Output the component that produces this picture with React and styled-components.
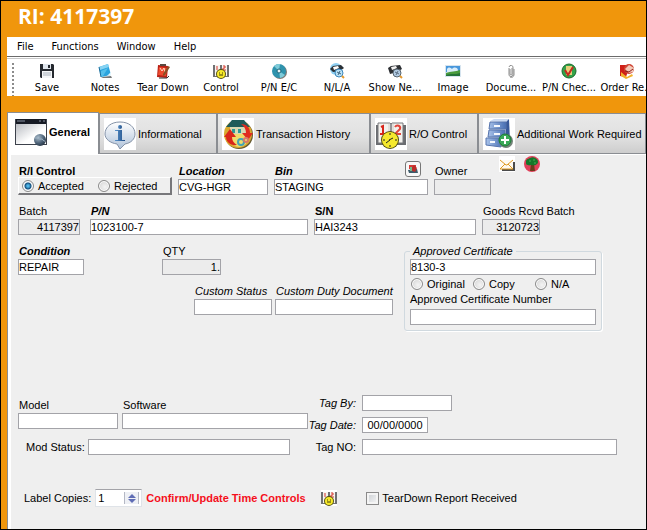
import React, { useState } from 'react';
import styled, { createGlobalStyle } from 'styled-components';

const TOOLS = [
  { label: 'Save', icon: 'save' },
  { label: 'Notes', icon: 'notes' },
  { label: 'Tear Down', icon: 'tear' },
  { label: 'Control', icon: 'control' },
  { label: 'P/N E/C', icon: 'disc' },
  { label: 'N/L/A', icon: 'nla' },
  { label: 'Show Ne...', icon: 'next' },
  { label: 'Image', icon: 'image' },
  { label: 'Docume...', icon: 'clip' },
  { label: 'P/N Chec...', icon: 'check' },
  { label: 'Order Re...', icon: 'order' },
];

const TABS = [
  { label: 'General', icon: 'window', width: 92 },
  { label: 'Informational', icon: 'info', width: 118 },
  { label: 'Transaction History', icon: 'history', width: 153 },
  { label: 'R/O Control', icon: 'calendar', width: 108 },
  { label: 'Additional Work Required', icon: 'cabinet', width: 168 },
];

const SMALL_ICONS = {
  save: (
    <>
      <path d="M1 1h13l1 1v13H2l-1-1z" fill="#25292f" />
      <path d="M4 1h8v5H4z" fill="#dfe5ec" />
      <path d="M9 2h2v3H9z" fill="#25292f" />
      <path d="M3 8h10v7H3z" fill="#f4f6f8" />
      <path d="M4 10h8M4 12h8" stroke="#a7b0bb" />
    </>
  ),
  notes: (
    <>
      <path d="M4 14l10-1 1 2H6z" fill="#777" />
      <path d="M2 4l9-3 3 11-10 2z" fill="#2ba4de" />
      <path d="M2 4l9-3 1 3-9 3z" fill="#86d3f3" />
      <path d="M4 8l7-3-5 8-2 1z" fill="#55c0ec" />
      <path d="M2 4l2 10" stroke="#1d6f9d" />
      <path d="M10 13l4-4v3z" fill="#e3f5fd" />
    </>
  ),
  tear: (
    <>
      <path d="M3 2l10 1-1 12-10-1z" fill="#b92116" />
      <path d="M4 4l8 1-1 8-8-1z" fill="#ee4a2e" />
      <path d="M5 5l2 3 2-3 1 4" stroke="#ffd9c0" fill="none" />
      <path d="M5 1h6v2H5z" fill="#5b4a40" />
      <path d="M8 11l5-8 2 1-5 8-2 1z" fill="#8c4f24" />
      <path d="M4 15h8l2-2" stroke="#333" fill="none" />
    </>
  ),
  control: (
    <>
      <path d="M0 2h16v12H0z" fill="#6f7073" />
      <path d="M2 2h5v11H2zM9 2h5v11H9z" fill="#f6f4f0" />
      <path d="M4 3v4M10 3h2v2h-2v2h3" stroke="#d9362c" fill="none" />
      <circle cx="8" cy="11" r="5" fill="#55520f" />
      <circle cx="8" cy="11" r="4" fill="#f7e92a" />
      <path d="M6 10h1M9 10h1M6 12h4" stroke="#3d3a0c" />
    </>
  ),
  disc: (
    <>
      <circle cx="9" cy="9" r="7" fill="#807a76" />
      <circle cx="8" cy="8" r="7" fill="#2f93ad" />
      <path d="M8 8L3 3a7 7 0 0 1 6-2zM8 8l6 4a7 7 0 0 1-5 3z" fill="#7fcbd9" />
      <circle cx="8" cy="8" r="2" fill="#eaf6f8" stroke="#1c6478" />
    </>
  ),
  nla: (
    <>
      <circle cx="7" cy="6" r="6" fill="#8fd0f3" />
      <path d="M1 6l3-3 8-1 3 3-4 3-7 1z" fill="#2a3036" />
      <path d="M4 4l5-1 1 2-5 2z" fill="#fff" />
      <circle cx="10" cy="10" r="4" fill="#b9e2f7" stroke="#3b86bb" />
      <path d="M8 9l4 2M9 12l2-4" stroke="#3d647e" />
      <path d="M13 13l2 2" stroke="#e59a2f" strokeWidth="2" />
    </>
  ),
  next: (
    <>
      <path d="M1 5l3-2 9-1 2 4-5 3-7 2z" fill="#2c2f33" />
      <path d="M4 4l5-1 1 2-5 2z" fill="#f2f2f2" />
      <circle cx="10" cy="10" r="4" fill="#b2cbe3" stroke="#55636f" />
      <path d="M8 9l4 2M9 12l2-4" stroke="#5c7083" />
      <path d="M13 13l2 2" stroke="#e59a2f" strokeWidth="2" />
    </>
  ),
  image: (
    <>
      <path d="M0 2h16v12H0z" fill="#d6e4ef" />
      <path d="M1 3h14v6H1z" fill="#4897dc" />
      <path d="M2 6c2-3 4-1 5 0 2-2 5-2 6 1v2H2z" fill="#d8ecfa" />
      <path d="M1 10c5-2 9-1 14-3v6H1z" fill="#4a9b3d" />
      <path d="M1 12c5-2 9 0 14-2v3H1z" fill="#247239" />
    </>
  ),
  clip: (
    <path
      d="M6 5v6a2 2 0 0 0 4 1V5a2 2 0 0 0-4-1M7 6v5a1 1 0 0 0 2 0V5M11 6v6a3 3 0 0 1-4 2"
      fill="none"
      stroke="#8b8b8b"
    />
  ),
  check: (
    <>
      <circle cx="8" cy="8" r="7" fill="#33a24a" stroke="#17692a" />
      <path d="M5 3h6v9H5z" fill="#e8cf79" />
      <path d="M4 7l3 5 5-8" fill="none" stroke="#c62a20" strokeWidth="2" />
    </>
  ),
  order: (
    <>
      <path d="M1 2h6l3 3-3 9-6-1z" fill="#cf2017" />
      <path d="M2 9l6 5 5-3 1 2-7 3-5-3z" fill="#f2b22c" />
      <circle cx="10" cy="6" r="5" fill="#cf4434" />
      <path d="M6 6l4-4 5 3-1 4-4 1z" fill="#f2c9b8" />
      <path d="M6 8l4 1 4-3" fill="none" stroke="#8f1f18" />
    </>
  ),
  mail: (
    <>
      <path d="M3 6h13v9H3z" fill="#4b4b4b" />
      <path d="M1 4h13v9H1z" fill="#fffaf0" />
      <path d="M1 4l6 5h1l6-5M1 13l5-5M14 13L9 8M1 13h13" fill="none" stroke="#df9a20" />
    </>
  ),
  tree: (
    <>
      <circle cx="8" cy="8" r="8" fill="#e0405a" />
      <path d="M7 8h3l1 7H6z" fill="#6b3c1c" />
      <path d="M2 6c0-3 2-3 4-4 2-1 4-1 5 0 3 1 4 5 2 6-2 2-3 1-5 1s-3 1-4 0c-2 0-2-1-2-3z" fill="#14772a" />
      <path d="M5 5h2M9 4h2M10 7h2" stroke="#43b04f" />
    </>
  ),
  stamp: (
    <>
      <path d="M4 4h7v4H4z" fill="#d33b37" />
      <path d="M3 9l9-1 1 4H4z" fill="#3e5c6b" />
      <path d="M5 9l4-5 3 3-2 4z" fill="#bc2e2b" />
      <path d="M5 6h2v4H5z" fill="#76ba8c" />
    </>
  ),
};

const TAB_ICONS = {
  window: (
    <>
      <defs>
        <linearGradient id="pane" x1="0" y1="0" x2="1" y2="1">
          <stop offset="0" stopColor="#b9bcc2" />
          <stop offset="0.6" stopColor="#fff" />
        </linearGradient>
        <radialGradient id="globe" cx="0.35" cy="0.3" r="0.8">
          <stop offset="0" stopColor="#a9bccb" />
          <stop offset="0.6" stopColor="#4a5f74" />
          <stop offset="1" stopColor="#202c3a" />
        </radialGradient>
      </defs>
      <path d="M0 3h32v26H0z" fill="#3c414b" />
      <path d="M1 8h30v20H1z" fill="url(#pane)" />
      <path d="M1 3h30v5H1z" fill="#161a24" />
      <path d="M2 5h8M24 5h2M28 5h2" stroke="#8790a0" />
      <circle cx="25" cy="24" r="6" fill="url(#globe)" />
      <path d="M20 22c3-1 4 2 6 1s2 3 4 2" stroke="#9fb3c4" fill="none" />
    </>
  ),
  info: (
    <>
      <defs>
        <linearGradient id="bubble" x1="0" y1="0" x2="0" y2="1">
          <stop offset="0" stopColor="#fff" />
          <stop offset="1" stopColor="#afc2d9" />
        </linearGradient>
        <linearGradient id="letter" x1="0" y1="0" x2="1" y2="0">
          <stop offset="0" stopColor="#5b93cb" />
          <stop offset="1" stopColor="#1d4c86" />
        </linearGradient>
      </defs>
      <path d="M0 0h32v32H0z" fill="#fff" />
      <path
        d="M16 4c9 0 15 5 15 12 0 5-4 9-10 10l-5 5-3-5C6 25 1 21 1 16 1 9 7 4 16 4z"
        fill="url(#bubble)"
        stroke="#8593a8"
      />
      <circle cx="16" cy="9" r="2" fill="url(#letter)" />
      <path d="M11 12h7v10h3v1H11v-1h3v-9h-3z" fill="url(#letter)" />
    </>
  ),
  history: (
    <>
      <path d="M0 0h32v32H0z" fill="#fff" />
      <circle cx="17" cy="17" r="14" fill="#665b32" />
      <circle cx="16" cy="16" r="14" fill="#d9a92f" />
      <circle cx="17" cy="20" r="9" fill="#f0dc6a" />
      <path d="M8 9h16v7H8z" fill="#d8d9b4" />
      <path d="M4 9l6-7h12l6 7z" fill="#1f5c5a" />
      <path d="M10 11h3v4h-3zM16 11h3v4h-3z" fill="#2f9a93" />
      <path d="M8 11l6 8H10c0 4 2 6 5 8-6 1-11-3-11-8H2z" fill="#d9261a" />
      <path d="M19 6c6 0 9 4 9 9h3l-5 7-6-7h4c0-4-2-7-5-9z" fill="#e02c1f" />
      <circle cx="19" cy="24" r="3" fill="none" stroke="#43a3b5" strokeWidth="2" />
      <circle cx="24" cy="22" r="2" fill="none" stroke="#d9786a" strokeWidth="2" />
    </>
  ),
  calendar: (
    <>
      <path d="M0 0h32v32H0z" fill="#fff" />
      <path d="M1 7h30v20H1z" fill="#6b6d71" />
      <path d="M3 5h12l1 1v19H3zM16 6l1-1h11v20H16z" fill="#f3f1ed" stroke="#77797d" />
      <path d="M14 6v19M18 6v19" stroke="#cfcdc8" />
      <path d="M6 9l2-1v8M5 16h6" fill="none" stroke="#d8261c" strokeWidth="2" />
      <path d="M20 9c2-3 6-1 5 2l-5 5h6" fill="none" stroke="#e2463c" strokeWidth="2" />
      <circle cx="15" cy="22" r="9" fill="#514d10" />
      <circle cx="15" cy="22" r="8" fill="#f5e92e" />
      <path d="M15 15v2M15 27v2M8 22h2M20 22h2M14 22l4-2M15 22l-4 3" stroke="#222" />
    </>
  ),
  cabinet: (
    <>
      <defs>
        <linearGradient id="steel" x1="0" y1="0" x2="1" y2="0">
          <stop offset="0" stopColor="#a9c3ea" />
          <stop offset="1" stopColor="#486fb4" />
        </linearGradient>
      </defs>
      <path d="M0 0h32v32H0z" fill="#fff" />
      <path d="M7 3l4-2h15l-3 3z" fill="#cbdaf2" />
      <path d="M23 4l3-3 1 22-5 5z" fill="#38599a" />
      <path d="M7 4h16v7H6zM6 12h16v7H5z" fill="url(#steel)" stroke="#5674ad" />
      <path d="M3 20h17l-2 9-15-2z" fill="url(#steel)" stroke="#5674ad" />
      <path d="M11 8h6M11 16h6M7 24h5" stroke="#f5f8fd" strokeWidth="2" />
      <circle cx="23" cy="23" r="7" fill="#738278" />
      <circle cx="22" cy="22" r="6" fill="#39a957" stroke="#1d7a37" />
      <path d="M22 18v8M18 22h8" stroke="#fff" strokeWidth="2" />
    </>
  ),
};

const SmallIcon = ({ name }) => (
  <svg width="16" height="16" viewBox="0 0 16 16" aria-hidden="true">
    {SMALL_ICONS[name]}
  </svg>
);

const TabIcon = ({ name }) => (
  <svg width="32" height="32" viewBox="0 0 32 32" aria-hidden="true">
    {TAB_ICONS[name]}
  </svg>
);

const Field = ({ id, label, strong, slanted, action, ...input }) => (
  <FieldBox>
    <FieldHead>
      <Label htmlFor={id} $strong={strong} $slanted={slanted}>
        {label}
      </Label>
      {action}
    </FieldHead>
    <TextInput id={id} {...input} />
  </FieldBox>
);

const App = () => {
  const [tab, setTab] = useState('General');
  const [copies, setCopies] = useState(1);

  return (
    <Screen>
      <GlobalStyle />
      <Title>RI: 4117397</Title>

      <MenuBar>
        {['File', 'Functions', 'Window', 'Help'].map((name) => (
          <MenuButton key={name}>{name}</MenuButton>
        ))}
      </MenuBar>

      <ToolBar>
        <Grip />
        {TOOLS.map(({ label, icon }) => (
          <ToolButton key={label}>
            <SmallIcon name={icon} />
            {label}
          </ToolButton>
        ))}
      </ToolBar>

      <Panel>
        <TabList role="tablist">
          {TABS.map(({ label, icon, width }) => (
            <Tab
              key={label}
              role="tab"
              aria-selected={tab === label}
              $active={tab === label}
              $width={width}
              onClick={() => setTab(label)}
            >
              <TabIcon name={icon} />
              {label}
            </Tab>
          ))}
        </TabList>

        <Form onSubmit={(e) => e.preventDefault()}>
          <Row $columns="154fr 90fr 154fr 57fr 120fr">
            <div role="radiogroup" aria-labelledby="ri-control">
              <FieldHead>
                <Label as="span" id="ri-control" $strong>
                  R/I Control
                </Label>
              </FieldHead>
              <RaisedBox>
                <Choice $width={76}>
                  <Radio name="control" defaultChecked />
                  Accepted
                </Choice>
                <Choice>
                  <Radio name="control" />
                  Rejected
                </Choice>
              </RaisedBox>
            </div>
            <Field id="location" label="Location" strong slanted defaultValue="CVG-HGR" />
            <Field
              id="bin"
              label="Bin"
              strong
              slanted
              defaultValue="STAGING"
              action={
                <StampButton type="button" aria-label="Bin lookup">
                  <SmallIcon name="stamp" />
                </StampButton>
              }
            />
            <Field id="owner" label="Owner" readOnly />
            <Shortcuts>
              <IconButton type="button" aria-label="Mail" $white>
                <SmallIcon name="mail" />
              </IconButton>
              <IconButton type="button" aria-label="Tree">
                <SmallIcon name="tree" />
              </IconButton>
            </Shortcuts>
          </Row>

          <Row $columns="66fr 218fr 162fr 135fr">
            <Field id="batch" label="Batch" readOnly $width={62} $right defaultValue="4117397" />
            <Field id="pn" label="P/N" strong slanted defaultValue="1023100-7" />
            <Field id="sn" label="S/N" strong defaultValue="HAI3243" />
            <Field id="goods" label="Goods Rcvd Batch" readOnly $width={58} $right defaultValue="3120723" />
          </Row>

          <Row $columns="380fr 198fr 9fr" $top>
            <Stack>
              <Pair>
                <Field id="condition" label="Condition" strong slanted $width={66} defaultValue="REPAIR" />
                <Field id="qty" label="QTY" readOnly $width={59} $right defaultValue="1." />
              </Pair>
              <Customs>
                <Field id="status" label="Custom Status" slanted $width={78} />
                <Field id="duty" label="Custom Duty Document" slanted $width={118} />
              </Customs>
            </Stack>
            <Certificate>
              <legend>Approved Certificate</legend>
              <TextInput aria-label="Approved Certificate" defaultValue="8130-3" />
              <Kinds>
                <Choice $width={62}>
                  <Radio name="kind" />
                  Original
                </Choice>
                <Choice $width={62}>
                  <Radio name="kind" />
                  Copy
                </Choice>
                <Choice>
                  <Radio name="kind" />
                  N/A
                </Choice>
              </Kinds>
              <Label htmlFor="cert-number">Approved Certificate Number</Label>
              <CertNumber id="cert-number" />
            </Certificate>
          </Row>

          <Details>
            <Stack>
              <Software>
                <Field id="model" label="Model" />
                <Field id="software" label="Software" />
              </Software>
              <Inline>
                <Label htmlFor="mod">Mod Status:</Label>
                <TextInput id="mod" $width={202} />
              </Inline>
            </Stack>
            <Tags>
              <Label htmlFor="tag-by" $slanted>
                Tag By:
              </Label>
              <TextInput id="tag-by" $width={90} />
              <Label htmlFor="tag-date" $slanted>
                Tag Date:
              </Label>
              <TextInput id="tag-date" $width={66} $center defaultValue="00/00/0000" />
              <Label htmlFor="tag-no">Tag NO:</Label>
              <TextInput id="tag-no" />
            </Tags>
          </Details>

          <Footer>
            <Label htmlFor="copies">Label Copies:</Label>
            <Spinner>
              <input
                id="copies"
                value={copies}
                onChange={(e) => setCopies(Number(e.target.value) || 0)}
              />
              <div>
                <Step type="button" aria-label="More copies" onClick={() => setCopies(copies + 1)}>
                  <svg width="8" height="4" viewBox="0 0 8 4">
                    <path d="M0 4l4-4 4 4z" fill="#5f6db5" />
                  </svg>
                </Step>
                <Step type="button" aria-label="Fewer copies" onClick={() => setCopies(Math.max(0, copies - 1))}>
                  <svg width="8" height="4" viewBox="0 0 8 4">
                    <path d="M0 0l4 4 4-4z" fill="#5f6db5" />
                  </svg>
                </Step>
              </div>
            </Spinner>
            <Confirm>Confirm/Update Time Controls</Confirm>
            <IconButton type="button" aria-label="Time controls" $white>
              <SmallIcon name="control" />
            </IconButton>
            <Received>
              <CheckBox />
              TearDown Report Received
            </Received>
          </Footer>
        </Form>
      </Panel>
    </Screen>
  );
};

export default App;


//styled-components
const GlobalStyle = createGlobalStyle`
  * {
    box-sizing: border-box;
  }

  body {
    margin: 0;
    font: 11px/12px 'Liberation Sans', Arial, sans-serif;
    color: #000;
  }

  button, input {
    font: inherit;
    color: inherit;
    margin: 0;
  }

  svg {
    display: block;
    flex: none;
  }
`;

const Screen = styled.div`
  display: flex;
  flex-direction: column;
  min-height: 100vh;
  padding-left: 6px;
  border: 1px solid #000;
  background: #f0960c;
  overflow: hidden;
`;

const Title = styled.h1`
  margin: 0;
  padding: 0 11px 6px;
  font: bold 21px/30px 'Open Sans', 'Noto Sans', sans-serif;
  color: #fff;
`;

const MenuBar = styled.nav`
  display: flex;
  gap: 18px;
  height: 20px;
  padding: 0 10px;
  background: #fff;
  border-bottom: 1px solid #6b6b6b;
`;

const MenuButton = styled.button`
  padding: 0;
  border: 0;
  background: none;
  font: 11px/18px 'DejaVu Sans Condensed', 'Noto Sans', sans-serif;
`;

const ToolBar = styled.div`
  display: flex;
  height: 39px;
  margin-bottom: 16px;
  background: #fff;
  border-top: 1px solid #fff;
  box-shadow: inset 0 1px #c8c8c8;
  overflow: hidden;
`;

const Grip = styled.div`
  flex: none;
  width: 2px;
  margin: 5px 4px 0 5px;
  background: repeating-linear-gradient(#8c8c8c 0 2px, #fff 2px 4px);
`;

const ToolButton = styled.button`
  display: flex;
  flex: none;
  flex-direction: column;
  align-items: center;
  gap: 2px;
  width: 58px;
  padding: 5px 0 0;
  border: 0;
  background: none;
  font: 11px/14px 'DejaVu Sans Condensed', 'Noto Sans', sans-serif;
  white-space: nowrap;
`;

const Panel = styled.main`
  display: flex;
  flex: 1;
  flex-direction: column;
`;

const TabList = styled.div`
  display: flex;
  align-items: flex-end;
  height: 42px;
`;

const Tab = styled.button`
  display: flex;
  align-items: center;
  flex: ${({ $width }) => `${$width} 0 ${$width}px`};
  gap: 2px;
  height: ${({ $active }) => ($active ? 42 : 41)}px;
  padding: ${({ $active }) => ($active ? '0 0 3px 7px' : '0 0 0 4px')};
  border: 1px solid #8a8d92;
  border-bottom-width: ${({ $active }) => ($active ? 0 : 1)}px;
  background: ${({ $active }) =>
    $active ? '#fff' : 'linear-gradient(#e9e9e9, #e0e0e0 60%, #cdcdcd)'};
  font-weight: ${({ $active }) => ($active ? 'bold' : 'normal')};
  white-space: nowrap;
`;

const Form = styled.form`
  display: flex;
  flex: 1;
  flex-direction: column;
  gap: 10px;
  margin-left: 1px;
  padding: 1px 29px 0 7px;
  background: #efefef;
  border: solid #fff;
  border-width: 1px 0 0 3px;
  box-shadow: -1px 0 #8a8d92;
`;

const Row = styled.div`
  display: grid;
  grid-template-columns: ${({ $columns }) => $columns};
  column-gap: 6px;
  align-items: ${({ $top }) => ($top ? 'start' : 'end')};

  & > * {
    min-width: 0;
  }
`;

const Stack = styled.div`
  display: flex;
  flex-direction: column;
  gap: 10px;
`;

const FieldBox = styled.div`
  display: flex;
  flex-direction: column;
  gap: 2px;
`;

const FieldHead = styled.div`
  display: flex;
  align-items: flex-end;
  justify-content: space-between;
  padding: 0 7px 0 1px;
  white-space: nowrap;
`;

const Label = styled.label`
  font-weight: ${({ $strong }) => ($strong ? 'bold' : 'normal')};
  font-style: ${({ $slanted }) => ($slanted ? 'italic' : 'normal')};
  white-space: nowrap;
`;

const TextInput = styled.input`
  width: ${({ $width }) => ($width ? `${$width}px` : '100%')};
  height: 16px;
  padding: 0;
  border: 1px solid #a3a3a8;
  background: ${({ readOnly }) => (readOnly ? '#ececec' : '#fff')};
  text-align: ${({ $right, $center }) => ($right ? 'right' : $center ? 'center' : 'left')};
`;

const RaisedBox = styled.div`
  display: flex;
  height: 18px;
  padding-left: 3px;
  border: solid;
  border-width: 1px 2px 2px 1px;
  border-color: #fff #77777b #77777b #fff;
`;

const Choice = styled.label`
  display: flex;
  align-items: center;
  gap: 4px;
  width: ${({ $width }) => ($width ? `${$width}px` : 'auto')};
`;

const Radio = styled.input.attrs({ type: 'radio' })`
  appearance: none;
  flex: none;
  width: 12px;
  height: 12px;
  border: 1px solid #8a8a8a;
  border-radius: 50%;
  background: radial-gradient(circle at 60% 60%, #f4f4f4, #cfcfcf);
  box-shadow: inset 0 0 0 1px #fff;

  &:checked {
    background: radial-gradient(circle, #4fb6e8 0 1px, #16507e 3px, #e4eaf0 4px);
  }
`;

const IconButton = styled.button`
  height: 16px;
  padding: 0;
  border: 0;
  background: ${({ $white }) => ($white ? '#fff' : 'none')};
`;

const StampButton = styled(IconButton)`
  display: flex;
  align-items: center;
  justify-content: center;
  width: 16px;
  border: 1px solid #777;
  border-radius: 3px;
  background: #f8f8f8;
`;

const Shortcuts = styled.div`
  display: flex;
  gap: 9px;
  align-self: start;
  height: 39px;
  padding-left: 2px;
`;

const Pair = styled.div`
  display: grid;
  grid-template-columns: 144fr 236fr;
`;

const Customs = styled.div`
  display: flex;
  justify-content: flex-end;
  gap: 3px;
  padding-right: 5px;

  ${FieldHead} {
    padding-right: 0;
  }
`;

const Certificate = styled.fieldset`
  display: flex;
  flex-direction: column;
  margin: 0;
  padding: 2px 5px 5px;
  border: 1px solid #d0d9df;
  border-radius: 3px;
  box-shadow: 1px 1px #fff;

  legend {
    padding: 0 3px;
    font-style: italic;
  }
`;

const Kinds = styled.div`
  display: flex;
  height: 18px;
  padding-left: 1px;
`;

const CertNumber = styled(TextInput)`
  margin-top: 4px;
`;

const Details = styled.div`
  display: grid;
  grid-template-columns: 290fr 309fr;
  align-items: end;
  margin-top: 54px;
`;

const Software = styled.div`
  display: grid;
  grid-template-columns: 100fr 186fr;
  gap: 4px;
`;

const Inline = styled.div`
  display: flex;
  align-items: center;
  gap: 3px;
  padding-left: 8px;
`;

const Tags = styled.div`
  display: grid;
  grid-template-columns: 48px 1fr;
  gap: 6px;
  align-items: center;
  justify-items: start;

  ${Label} {
    justify-self: end;
  }
`;

const Footer = styled.div`
  display: flex;
  align-items: center;
  gap: 4px;
  margin-top: 24px;
  padding: 0 0 20px 6px;
`;

const Spinner = styled.div`
  display: flex;
  width: 47px;
  height: 18px;
  border: 1px solid #dfe3e8;
  border-top-color: #a3a3a8;
  background: #fff;

  input {
    flex: 1;
    min-width: 0;
    padding: 0 2px;
    border: 0;
    background: none;
  }

  div {
    display: flex;
    flex-direction: column;
    justify-content: center;
    gap: 1px;
    width: 15px;
    margin: 2px;
    border: solid #b4b8c4;
    border-width: 0 1px;
    background: #eef0f5;
  }
`;

const Step = styled.button`
  display: flex;
  justify-content: center;
  padding: 0;
  border: 0;
  background: none;
`;

const Confirm = styled.strong`
  min-width: 171px;
  color: #f5101c;
  white-space: nowrap;
`;

const Received = styled.label`
  display: flex;
  align-items: center;
  gap: 3px;
  margin-left: 25px;
  white-space: nowrap;
`;

const CheckBox = styled.input.attrs({ type: 'checkbox' })`
  appearance: none;
  width: 13px;
  height: 13px;
  border: 1px solid #8a8a8a;
  background: linear-gradient(135deg, #c9cdd2, #f8f8f8);
  box-shadow: inset 0 0 0 2px #f4f4f4;

  &:checked {
    background: #16507e;
  }
`;
